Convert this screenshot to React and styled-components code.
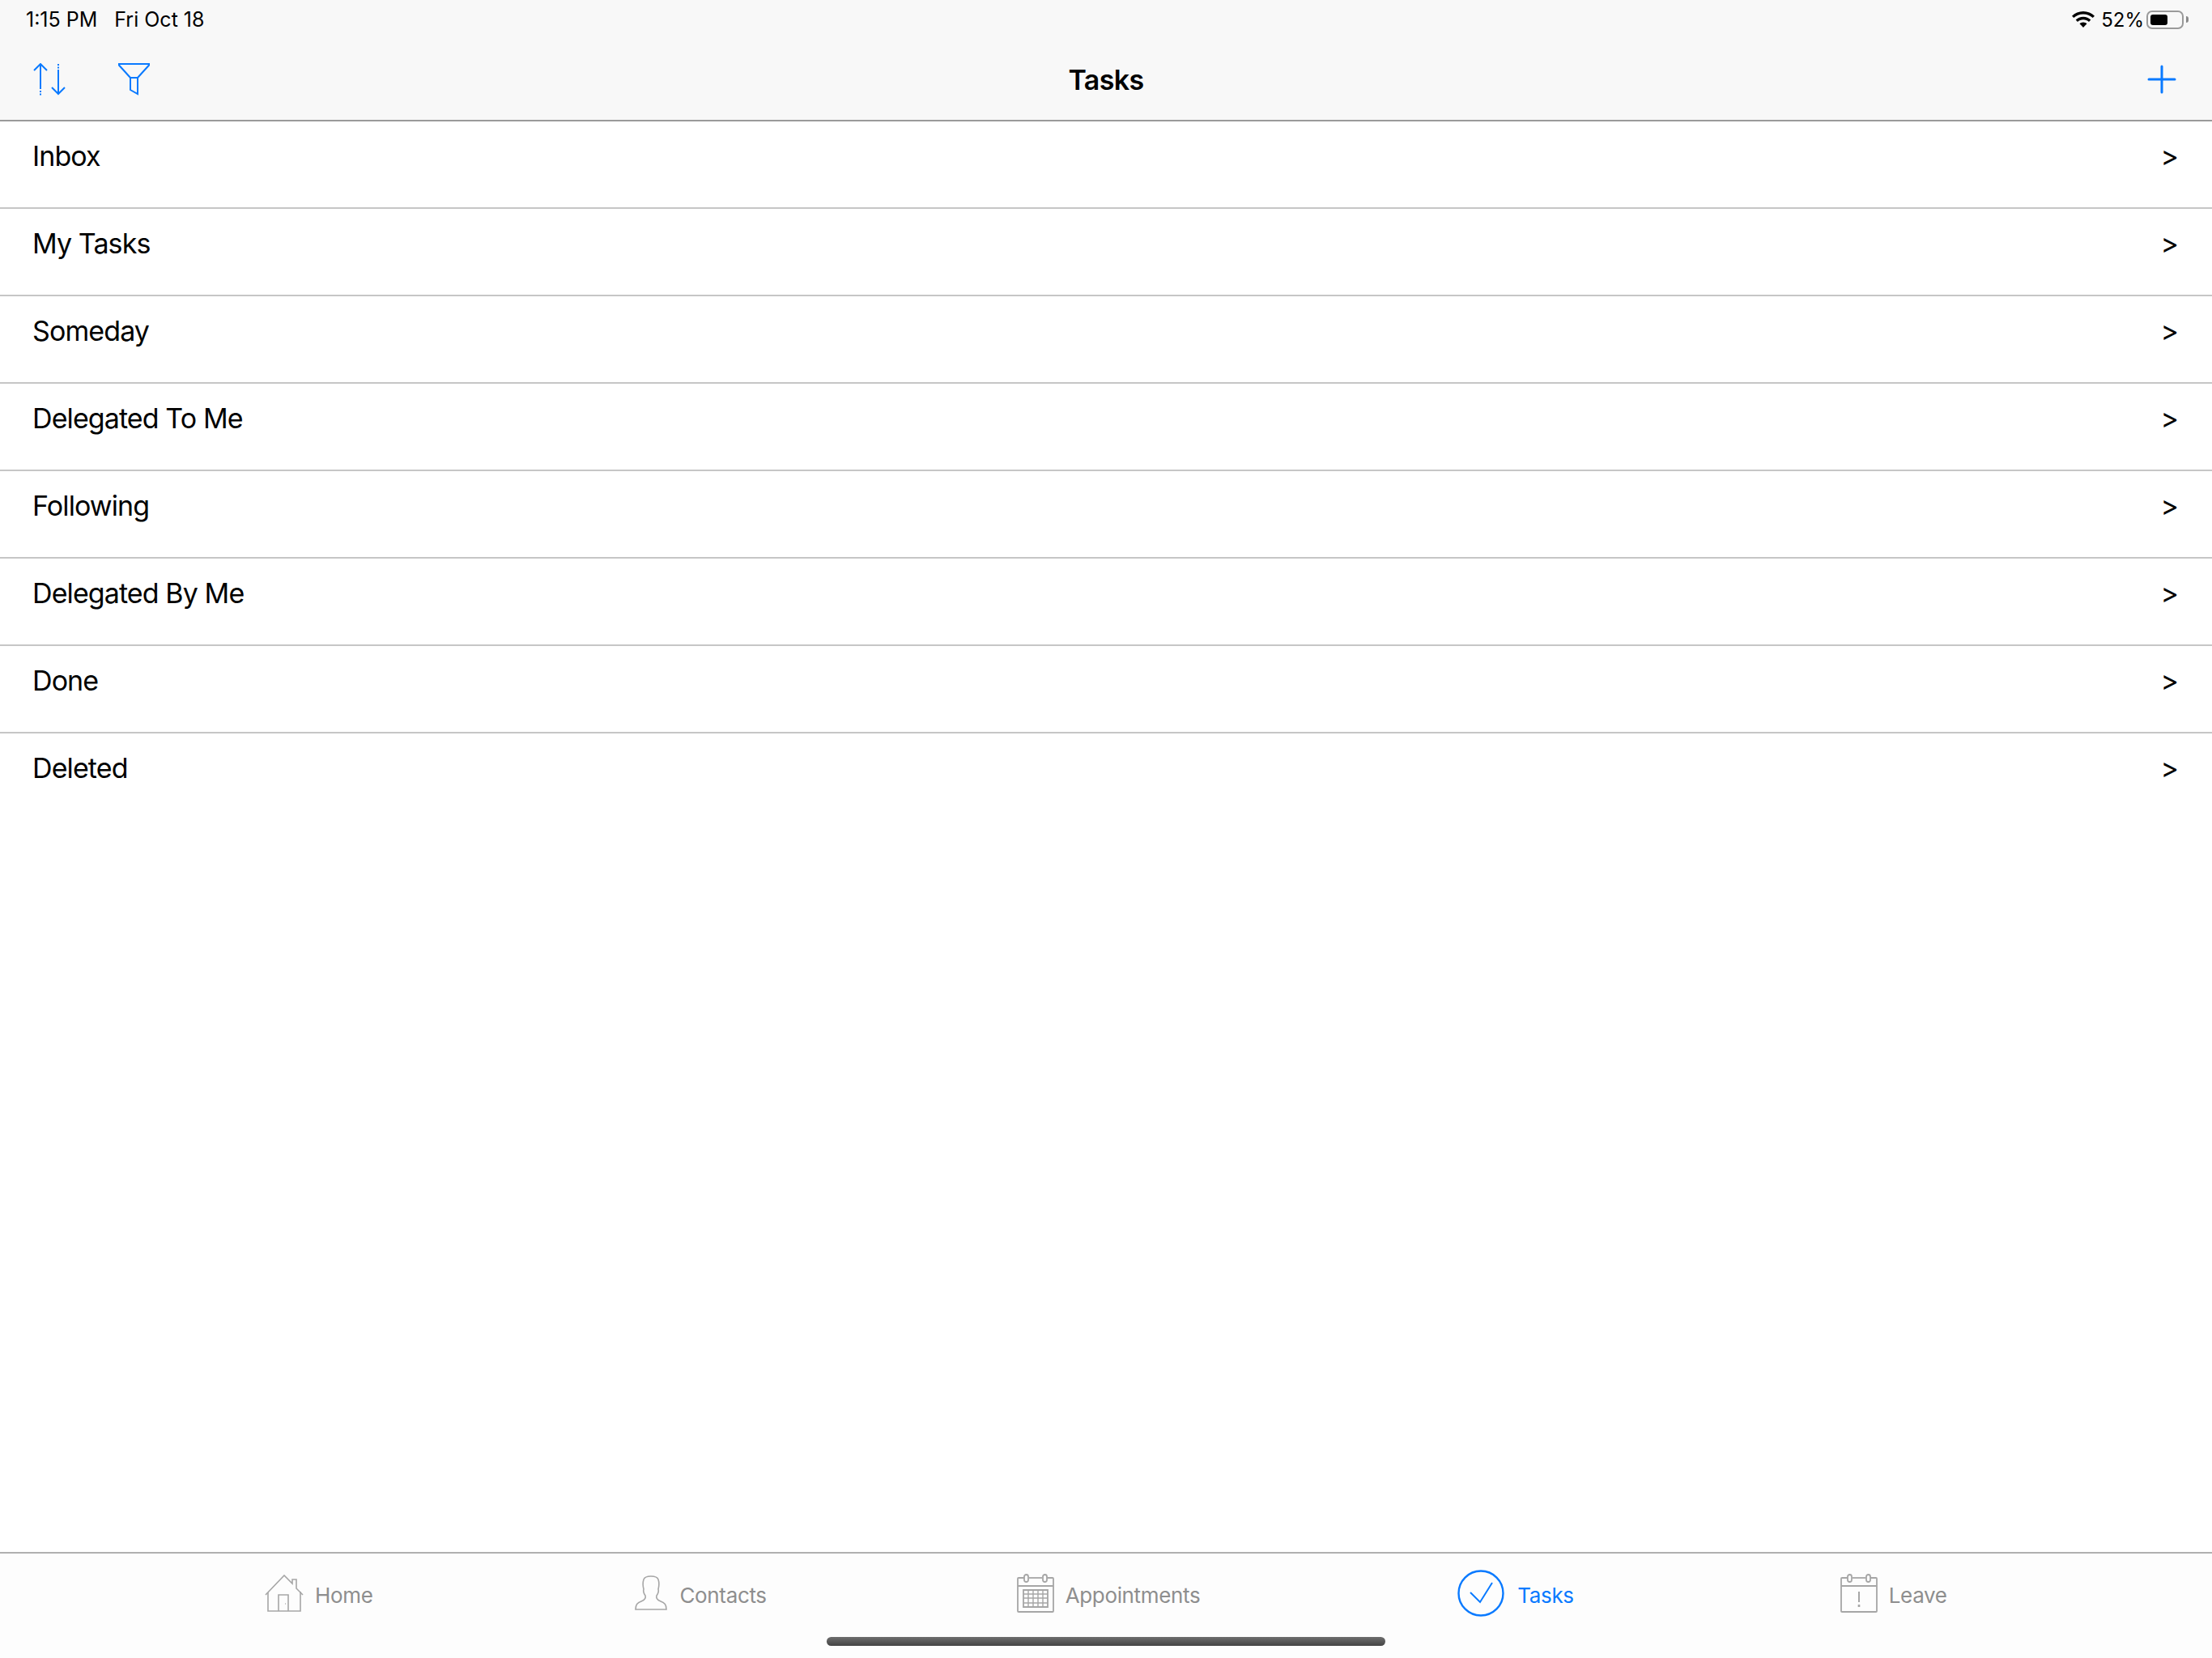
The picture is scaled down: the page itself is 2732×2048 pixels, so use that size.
import React from 'react';
import styled, {createGlobalStyle} from 'styled-components';

const blue = '#0a7aff';
const grey = '#a6a6a6';

const GlobalStyle = createGlobalStyle`
  html, body {
    margin: 0;
    padding: 0;
    background: #ffffff;
    font-family: Inter, "Liberation Sans", sans-serif;
  }
`;

const lists = ['Inbox', 'My Tasks', 'Someday', 'Delegated To Me', 'Following', 'Delegated By Me', 'Done', 'Deleted'];

const SortIcon = () => (
    <svg width="40" height="40" viewBox="0 0 40 40" fill="none" stroke={blue} strokeWidth="2">
        <path d="M1 9 L9 1 L17 9"/>
        <path d="M9 1 V32 M9 34 V36 M9 37.500 V39.500"/>
        <path d="M31 1 V3 M31 4.500 V6.500 M31 8 V38"/>
        <path d="M23 30 L31 38 L39 30"/>
    </svg>
);

const FilterIcon = () => (
    <svg width="40" height="40" viewBox="0 0 40 40" fill="none" stroke={blue} strokeWidth="2">
        <path d="M1 1 H38 V2.500 L24 18 V38 L15 33 V18 L1 2.500 Z"/>
        <path d="M15 18 H24"/>
    </svg>
);

const PlusIcon = () => (
    <svg width="36" height="36" viewBox="0 0 36 36" fill="none" stroke={blue} strokeWidth="3" strokeLinecap="round">
        <path d="M18 2 V34 M2 18 H34"/>
    </svg>
);

const WifiIcon = () => (
    <svg width="28" height="20" viewBox="0 0 28 20" fill="#000">
        <path d="M14 0 C19.500 0 24.300 2.200 28 5.700 L25.700 8.100 C22.700 5.200 18.600 3.400 14 3.400 C9.400 3.400 5.300 5.200 2.300 8.100 L0 5.700 C3.700 2.200 8.500 0 14 0 Z"/>
        <path d="M14 6.800 C17.600 6.800 20.900 8.200 23.300 10.500 L21 12.900 C19.200 11.200 16.700 10.200 14 10.200 C11.300 10.200 8.800 11.200 7 12.900 L4.700 10.500 C7.100 8.200 10.400 6.800 14 6.800 Z"/>
        <path d="M14 13.500 C15.700 13.500 17.300 14.200 18.500 15.300 L14 20 L9.500 15.300 C10.700 14.200 12.300 13.500 14 13.500 Z"/>
    </svg>
);

const HomeIcon = () => (
    <svg width="48" height="46" viewBox="0 0 48 46" fill="none" stroke={grey} strokeWidth="1.600">
        <path d="M1 25 L24 1 L34 11 V6 H39 V17 L47 25"/>
        <path d="M4 22 V45 H44 V21"/>
        <path d="M17 45 V25 H29 V45"/>
        <path d="M25 36 H25.800"/>
    </svg>
);

const ContactsIcon = () => (
    <svg width="40" height="44" viewBox="0 0 40 44" fill="none" stroke={grey} strokeWidth="1.600">
        <path d="M1 42 C1 36 3 34 8 32 C13 30 14 28 13 25 C11 22 10 20 11 17 C10 13 10 8 11 5 C12 2 16 1 20 1 C24 1 28 2 29 5 C30 8 30 13 29 17 C30 20 29 22 27 25 C26 28 27 30 32 32 C37 34 39 36 39 42 Z"/>
    </svg>
);

const CalendarFrame = ({children}) => (
    <svg width="46" height="48" viewBox="0 0 46 48" fill="none" stroke={grey} strokeWidth="1.800">
        <path d="M9 5 H2 A1 1 0 0 0 1 6 V46 A1 1 0 0 0 2 47 H44 A1 1 0 0 0 45 46 V6 A1 1 0 0 0 44 5 H37"/>
        <path d="M15 5 H31"/>
        <path d="M1 15 H45"/>
        <rect x="9" y="1" width="5" height="9" rx="2.500"/>
        <rect x="32" y="1" width="5" height="9" rx="2.500"/>
        {children}
    </svg>
);

const AppointmentsIcon = () => (
    <CalendarFrame>
        <path d="M8 20 H38 V41 H8 Z"/>
        <path d="M14 20 V41 M20 20 V41 M26 20 V41 M32 20 V41 M8 25 H38 M8 30 H38 M8 36 H38" strokeWidth="1.400"/>
    </CalendarFrame>
);

const LeaveIcon = () => (
    <CalendarFrame>
        <path d="M23 22 V35" strokeWidth="2"/>
        <path d="M23 38 V41" strokeWidth="2.600"/>
    </CalendarFrame>
);

const TasksIcon = () => (
    <svg width="58" height="58" viewBox="0 0 58 58" fill="none" stroke={blue} strokeWidth="2.400">
        <circle cx="29" cy="29" r="27.500"/>
        <path d="M16 28 L28 40 L43 16" strokeWidth="2"/>
    </svg>
);

const tabs = [
    {label: 'Home', icon: <HomeIcon/>, gap: 14, offset: 327},
    {label: 'Contacts', icon: <ContactsIcon/>, gap: 15, offset: 324},
    {label: 'Appointments', icon: <AppointmentsIcon/>, gap: 14, offset: 309},
    {label: 'Tasks', icon: <TasksIcon/>, gap: 16, offset: 318, active: true},
    {label: 'Leave', icon: <LeaveIcon/>, gap: 14, offset: 329},
];

const App = () => {
    return (
        <Page>
            <GlobalStyle/>
            <Header>
                <StatusBar>
                    <StatusLeft>
                        <span>1:15 PM</span>
                        <span>Fri Oct 18</span>
                    </StatusLeft>
                    <StatusRight>
                        <WifiIcon/>
                        <span>52%</span>
                        <Battery>
                            <BatteryFill/>
                        </Battery>
                    </StatusRight>
                </StatusBar>
                <NavBar>
                    <NavGroup>
                        <SortIcon/>
                        <FilterIcon/>
                    </NavGroup>
                    <NavTitle>Tasks</NavTitle>
                    <PlusIcon/>
                </NavBar>
            </Header>
            <List>
                {lists.map((name) => (
                    <Row key={name}>
                        <RowLabel>{name}</RowLabel>
                        <RowArrow>&gt;</RowArrow>
                    </Row>
                ))}
            </List>
            <TabBar>
                <TabRow>
                    {tabs.map((tab) => (
                        <Tab key={tab.label} $gap={tab.gap} $offset={tab.offset} $active={tab.active}>
                            {tab.icon}
                            <TabLabel>{tab.label}</TabLabel>
                        </Tab>
                    ))}
                </TabRow>
                <HomeIndicator/>
            </TabBar>
        </Page>
    );
};

const Page = styled.div`
  width: 2732px;
  height: 2048px;
  display: flex;
  flex-direction: column;
  overflow: hidden;
  background: #ffffff;
`;

const Header = styled.header`
  height: 148px;
  background: #f8f8f8;
  border-bottom: 2px solid #9a9a9a;
`;

const StatusBar = styled.div`
  height: 48px;
  padding: 0 35px 0 32px;
  display: flex;
  align-items: center;
  justify-content: space-between;
  font-size: 24px;
  color: #000000;
`;

const StatusLeft = styled.div`
  display: flex;
  gap: 21px;
  font-size: 25px;
`;

const StatusRight = styled.div`
  display: flex;
  align-items: center;
  gap: 8px;
`;

const Battery = styled.div`
  position: relative;
  width: 46px;
  height: 23px;
  box-sizing: border-box;
  padding: 3px;
  border: 2px solid #9a9a9a;
  border-radius: 7px;
  margin-left: -5px;
  &::after {
    content: "";
    position: absolute;
    right: -8px;
    top: 5px;
    width: 3px;
    height: 8px;
    background: #8a8a8a;
    border-radius: 0 3px 3px 0;
  }
`;

const BatteryFill = styled.div`
  width: 21px;
  height: 100%;
  background: #000000;
  border-radius: 3px;
`;

const NavBar = styled.div`
  position: relative;
  height: 100px;
  padding: 0 44px 0 41px;
  display: flex;
  align-items: center;
  justify-content: space-between;
`;

const NavGroup = styled.div`
  display: flex;
  align-items: center;
  gap: 65px;
`;

const NavTitle = styled.div`
  position: absolute;
  left: 0;
  right: 0;
  text-align: center;
  font-size: 34px;
  font-weight: 600;
  letter-spacing: -0.6px;
  color: #000000;
`;

const List = styled.main`
  flex: 1;
`;

const Row = styled.div`
  height: 108px;
  box-sizing: border-box;
  padding: 0 42px 22px 40px;
  display: flex;
  align-items: center;
  justify-content: space-between;
  border-bottom: 2px solid #c6c6c6;
  font-size: 34px;
  letter-spacing: -0.9px;
  color: #000000;
  &:last-child {
    border-bottom: none;
    padding-bottom: 24px;
  }
`;

const RowLabel = styled.div``;

const RowArrow = styled.div`
  font-size: 34px;
`;

const TabBar = styled.nav`
  position: relative;
  height: 131px;
  box-sizing: border-box;
  background: #fdfdfd;
  border-top: 2px solid #b0b0b0;
`;

const TabRow = styled.div`
  display: flex;
  align-items: center;
  height: 98px;
`;

const Tab = styled.div`
  display: flex;
  align-items: center;
  gap: ${(props) => props.$gap}px;
  margin-left: ${(props) => props.$offset}px;
  font-size: 26px;
  letter-spacing: -0.35px;
  color: ${(props) => (props.$active ? blue : '#8e8e8e')};
`;

const TabLabel = styled.span`
  padding-top: 5px;
`;

const HomeIndicator = styled.div`
  position: absolute;
  left: 1021px;
  top: 103px;
  width: 690px;
  height: 11px;
  border-radius: 6px;
  background: linear-gradient(to bottom, #6e6e6e, #444444);
`;

export default App;
